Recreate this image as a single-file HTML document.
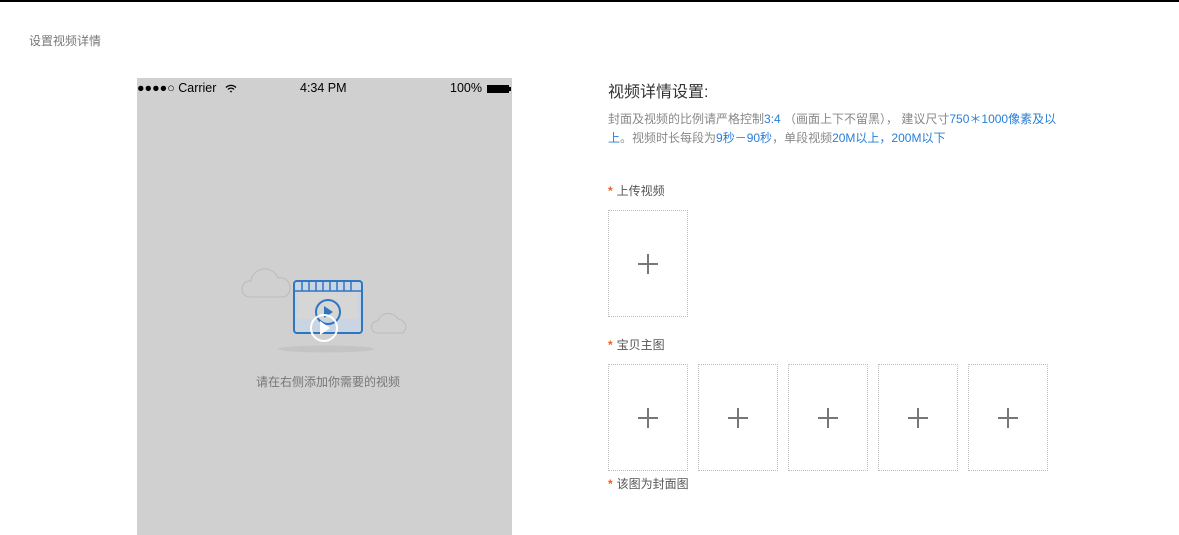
<!DOCTYPE html>
<html><head><meta charset="utf-8"><style>
*{margin:0;padding:0;box-sizing:border-box}
body{width:1179px;height:535px;background:#fff;position:relative;overflow:hidden;font-family:"Liberation Sans","Noto Sans CJK SC",sans-serif}
.a{position:absolute}
.box{position:absolute;width:80px;height:107px;border:1px dotted #bbb}
.box:before{content:"";position:absolute;left:29px;top:52px;width:20px;height:2px;background:#777}
.box:after{content:"";position:absolute;left:38px;top:43px;width:2px;height:20px;background:#777}
.lbl{position:absolute;font-size:12px;color:#555;white-space:nowrap}
.lbl b{color:#f06020;font-weight:bold;margin-right:4px}
.bl{color:#2a7ed6}
</style></head><body>
<div class="a" style="left:0;top:0;width:1179px;height:2px;background:#000"></div>
<div class="a" style="left:29px;top:32px;font-size:12px;color:#777">设置视频详情</div>
<div class="a" style="left:137px;top:78px;width:375px;height:457px;background:#d0d0d0">
  <div class="a" style="left:0;top:3px;font-size:12.5px;color:#000;white-space:nowrap">●●●●○ Carrier</div>
  <svg class="a" style="left:88px;top:6px" width="12" height="9" viewBox="0 0 12 9"><path d="M1 3.5a7 7 0 0 1 10 0M3 5.5a4 4 0 0 1 6 0" fill="none" stroke="#000" stroke-width="1.3"/><path d="M4.8 7.3a1.7 1.7 0 0 1 2.4 0L6 8.6z" fill="#000"/></svg>
  <div class="a" style="left:163px;top:3px;font-size:12.5px;color:#000">4:34 PM</div>
  <div class="a" style="left:313px;top:3px;font-size:12.5px;color:#000">100%</div>
  <div class="a" style="left:350px;top:7px;width:22px;height:8px;background:#000"></div>
  <div class="a" style="left:372px;top:9px;width:2px;height:4px;background:#000"></div>
  <svg class="a" style="left:100px;top:185px" width="180" height="95" viewBox="0 0 180 95">
    <path d="M12 34 a8 8 0 0 1 2-16 a14 14 0 0 1 27-3 a10 10 0 0 1 6 19z" fill="none" stroke="#bbb" stroke-width="1"/>
    <path d="M140 70 a6 6 0 0 1 1-12 a11 11 0 0 1 20-2 a8 8 0 0 1 5 14z" fill="none" stroke="#bbb" stroke-width="1"/>
    <ellipse cx="89" cy="86" rx="48" ry="3.5" fill="#c4c4c4"/>
    <rect x="57" y="18" width="68" height="52" rx="3" fill="#c9d5e2" stroke="#2f76c0" stroke-width="2"/>
    <rect x="61" y="29" width="60" height="27" fill="#d6d6d6"/>
    <path d="M57 28h68M65 19v9M72 19v9M79 19v9M86 19v9M93 19v9M100 19v9M107 19v9M114 19v9" stroke="#2f76c0" stroke-width="1.5"/>
    <circle cx="91" cy="49" r="12" fill="none" stroke="#2f76c0" stroke-width="2"/>
    <path d="M87 43l9 6-9 6z" fill="#2f76c0"/>
    <circle cx="87" cy="65" r="13" fill="none" stroke="#fff" stroke-width="2"/>
    <path d="M83 58l10 7-10 7z" fill="#fff"/>
  </svg>
  <div class="a" style="left:119px;top:295px;font-size:12px;color:#777">请在右侧添加你需要的视频</div>
</div>
<div class="a" style="left:608px;top:78px;font-size:16px;color:#333">视频详情设置:</div>
<div class="a" style="left:608px;top:110px;width:460px;font-size:12px;line-height:19px;color:#888">封面及视频的比例请严格控制<span class="bl">3:4</span> （画面上下不留黑）， 建议尺寸<span class="bl">750＊1000像素及以上</span>。视频时长每段为<span class="bl">9秒－90秒</span>，单段视频<span class="bl">20M以上，200M以下</span></div>
<div class="lbl" style="left:608px;top:182px"><b>*</b>上传视频</div>
<div class="box" style="left:608px;top:210px"></div>
<div class="lbl" style="left:608px;top:336px"><b>*</b>宝贝主图</div>
<div class="box" style="left:608px;top:364px"></div>
<div class="box" style="left:698px;top:364px"></div>
<div class="box" style="left:788px;top:364px"></div>
<div class="box" style="left:878px;top:364px"></div>
<div class="box" style="left:968px;top:364px"></div>
<div class="lbl" style="left:608px;top:475px"><b>*</b>该图为封面图</div>
</body></html>
